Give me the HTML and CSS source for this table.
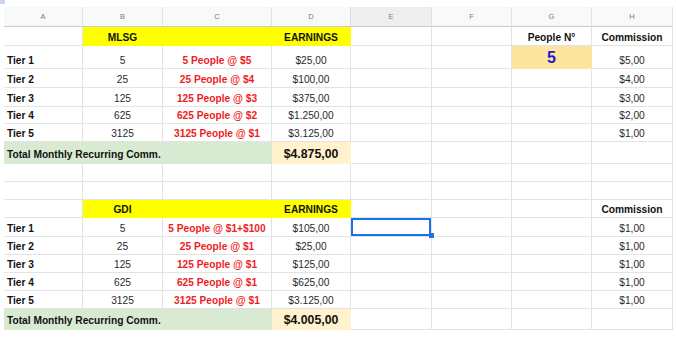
FILE: index.html
```html
<!DOCTYPE html>
<html>
<head>
<meta charset="utf-8">
<link rel="stylesheet" href="styles.css">
</head>
<body>
<div class="corner"></div>
<div class="sheet">
  <div class="grid">
    <!-- column headers -->
    <div class="c hd">A</div><div class="c hd">B</div><div class="c hd">C</div><div class="c hd">D</div><div class="c hd hd-sel">E</div><div class="c hd">F</div><div class="c hd">G</div><div class="c hd">H</div>

    <!-- MLSG header row -->
    <div class="c"></div><div class="c y b">MLSG</div><div class="c y"></div><div class="c y b">EARNINGS</div><div class="c"></div><div class="c"></div><div class="c b">People N°</div><div class="c b">Commission</div>

    <div class="c l b">Tier 1</div><div class="c">5</div><div class="c red">5 People @ $5</div><div class="c">$25,00</div><div class="c"></div><div class="c"></div><div class="c gv">5</div><div class="c">$5,00</div>
    <div class="c l b">Tier 2</div><div class="c">25</div><div class="c red">25 People @ $4</div><div class="c">$100,00</div><div class="c"></div><div class="c"></div><div class="c"></div><div class="c">$4,00</div>
    <div class="c l b">Tier 3</div><div class="c">125</div><div class="c red">125 People @ $3</div><div class="c">$375,00</div><div class="c"></div><div class="c"></div><div class="c"></div><div class="c">$3,00</div>
    <div class="c l b">Tier 4</div><div class="c">625</div><div class="c red">625 People @ $2</div><div class="c">$1.250,00</div><div class="c"></div><div class="c"></div><div class="c"></div><div class="c">$2,00</div>
    <div class="c l b">Tier 5</div><div class="c">3125</div><div class="c red">3125 People @ $1</div><div class="c">$3.125,00</div><div class="c"></div><div class="c"></div><div class="c"></div><div class="c">$1,00</div>
    <div class="c l b g tot span3">Total Monthly Recurring Comm.</div><div class="c o big">$4.875,00</div><div class="c"></div><div class="c"></div><div class="c"></div><div class="c"></div>

    <!-- empty rows -->
    <div class="c"></div><div class="c"></div><div class="c"></div><div class="c"></div><div class="c"></div><div class="c"></div><div class="c"></div><div class="c"></div>
    <div class="c"></div><div class="c"></div><div class="c"></div><div class="c"></div><div class="c"></div><div class="c"></div><div class="c"></div><div class="c"></div>

    <!-- GDI header row -->
    <div class="c"></div><div class="c y b">GDI</div><div class="c y"></div><div class="c y b">EARNINGS</div><div class="c"></div><div class="c"></div><div class="c"></div><div class="c b">Commission</div>

    <div class="c l b">Tier 1</div><div class="c">5</div><div class="c red">5 People @ $1+$100</div><div class="c">$105,00</div><div class="c sel"><span class="handle"></span></div><div class="c"></div><div class="c"></div><div class="c">$1,00</div>
    <div class="c l b">Tier 2</div><div class="c">25</div><div class="c red">25 People @ $1</div><div class="c">$25,00</div><div class="c"></div><div class="c"></div><div class="c"></div><div class="c">$1,00</div>
    <div class="c l b">Tier 3</div><div class="c">125</div><div class="c red">125 People @ $1</div><div class="c">$125,00</div><div class="c"></div><div class="c"></div><div class="c"></div><div class="c">$1,00</div>
    <div class="c l b">Tier 4</div><div class="c">625</div><div class="c red">625 People @ $1</div><div class="c">$625,00</div><div class="c"></div><div class="c"></div><div class="c"></div><div class="c">$1,00</div>
    <div class="c l b">Tier 5</div><div class="c">3125</div><div class="c red">3125 People @ $1</div><div class="c">$3.125,00</div><div class="c"></div><div class="c"></div><div class="c"></div><div class="c">$1,00</div>
    <div class="c l b g tot span3">Total Monthly Recurring Comm.</div><div class="c o big">$4.005,00</div><div class="c"></div><div class="c"></div><div class="c"></div><div class="c"></div>
  </div>
</div>
</body>
</html>
```

FILE: styles.css
```css
html, body {
  margin: 0;
  padding: 0;
  background: #ffffff;
}

body {
  position: relative;
  width: 676px;
  height: 338px;
  overflow: hidden;
  font-family: "Liberation Sans", Arial, sans-serif;
}

.corner {
  position: absolute;
  left: 0;
  top: 0;
  width: 5px;
  height: 4px;
  background: #c9d6f1;
}

.sheet {
  padding: 7px 0 0 4px;
}

.grid {
  display: grid;
  grid-template-columns: 79px 80px 109px 79px 81px 80px 80px 81px;
  grid-template-rows: 20px 19px 23px 19px 19px 17px 18px 22px 18px 18px 18px 19px 18px 18px 18px 18px 21px;
}

.c {
  box-sizing: border-box;
  border-right: 1px solid #e2e3e3;
  border-bottom: 1px solid #e2e3e3;
  display: flex;
  align-items: flex-end;
  justify-content: center;
  padding: 0 3px 1px;
  font-size: 10.2px;
  line-height: 12px;
  color: #2a2a2a;
  white-space: nowrap;
  overflow: visible;
}

.l {
  justify-content: flex-start;
}

.b {
  font-weight: bold;
  color: #111;
}

.red {
  font-weight: bold;
  color: #ee1d24;
}

.hd {
  background: #f8f9fa;
  border-right-color: #dfe1e3;
  border-bottom-color: #c7c9cc;
  align-items: center;
  padding: 0;
  font-size: 7.5px;
  color: #7a7a7a;
}

.hd-sel {
  background: #eceef0;
}

.y {
  background: #ffff00;
  border-color: transparent;
}

.g {
  background: #d9ead3;
  border-color: transparent;
}

.o {
  background: #fff2cc;
  border-color: transparent;
}

.span3 {
  grid-column: span 3;
}

.tot {
  padding-bottom: 2px;
  padding-left: 3px;
}

.big {
  font-size: 12.3px;
  line-height: 14px;
  font-weight: bold;
  color: #111;
  padding-bottom: 2px;
}

.gv {
  background: #fde59f;
  border-color: transparent;
  font-size: 16px;
  line-height: 18px;
  font-weight: bold;
  color: #1d1dcc;
  padding-bottom: 1px;
}

.sel {
  position: relative;
}

.sel::after {
  content: "";
  position: absolute;
  left: 0;
  top: 0;
  right: 0;
  bottom: 0;
  border: 2px solid #1a73e8;
}

.handle {
  position: absolute;
  right: -3px;
  bottom: -2px;
  width: 5px;
  height: 5px;
  background: #1a73e8;
  z-index: 2;
}
```
